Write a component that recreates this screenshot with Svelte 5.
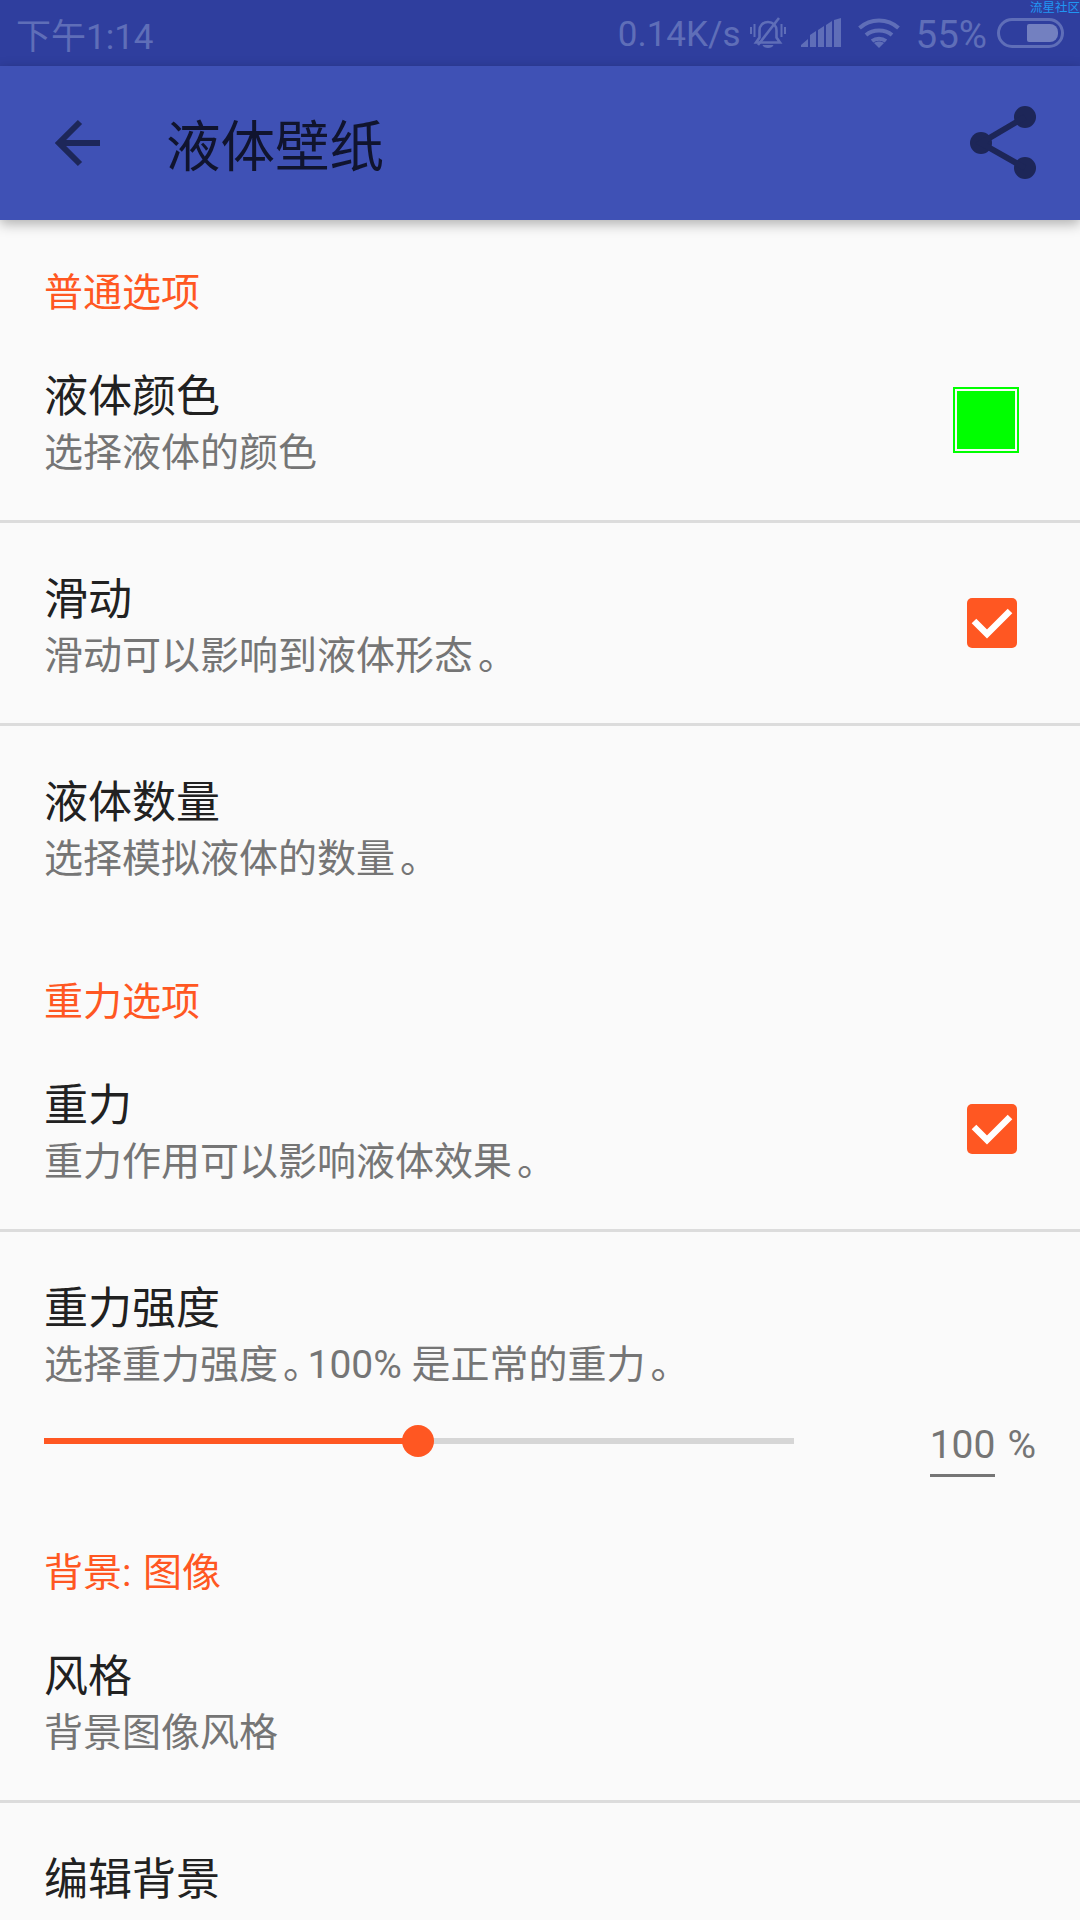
<script>
  const pages = [
    { type: 'cat', label: '普通选项' },
    { title: '液体颜色', summary: '选择液体的颜色', widget: 'color', divider: true },
    { title: '滑动', summary: '滑动可以影响到液体形态。', widget: 'check', divider: true },
    { title: '液体数量', summary: '选择模拟液体的数量。' },
    { type: 'cat', label: '重力选项' },
    { title: '重力', summary: '重力作用可以影响液体效果。', widget: 'check', divider: true },
    { title: '重力强度', summary: '选择重力强度。100% 是正常的重力。', widget: 'slider' },
    { type: 'cat', label: '背景: 图像' },
    { title: '风格', summary: '背景图像风格', divider: true },
    { title: '编辑背景', summary: '' }
  ];

  // the full stop sits further right in the cell than this font draws it
  const parts = (s) => s.split(/(。)/).filter(Boolean);
</script>

<div class="screen">
  <div class="status">
    <span class="time">下午1:14</span>
    <div class="status-right">
      <span class="speed">0.14K/s</span>
      <svg class="bell" width="36" height="32" viewBox="0 0 36 32" fill="none" stroke="#5f6eb8" stroke-width="2.6">
        <path d="M6 25.500h24l-3.500-5v-7c0-5-3.500-8.500-8.500-8.500s-8.500 3.500-8.500 8.500v7z" />
        <path d="M8 28 29 1" />
        <path d="M12.500 28h11c-1 4-10 4-11 0z" fill="#5f6eb8" stroke="none" />
        <path d="M1 10v7M4.500 7v13M31.500 7v13M35 10v7" stroke-width="2" />
      </svg>
      <svg class="signal" width="40" height="30" viewBox="0 0 40 30" fill="#5f6eb8">
        <path d="M0 29v-2l7-6v8zM9 29V17l6-4v16zM17 29V12l6-4v21zM25 29V7l6-4v26zM33 29V2l7-2v29z" />
      </svg>
      <svg class="wifi" width="42" height="30" viewBox="0 0 42 30" fill="none" stroke="#5f6eb8" stroke-width="4">
        <path d="M1.500 10c11-10 28-10 39 0M8 17c7-6 19-6 26 0M14 23c4-3 10-3 14 0" />
        <path d="M21 30l-5-5c3-2 7-2 10 0z" fill="#5f6eb8" stroke="none" />
      </svg>
      <span class="pct">55%</span>
      <div class="battery"><div class="level"></div></div>
    </div>
    <span class="mark">流星社区</span>
  </div>

  <header class="bar">
    <svg class="back" width="48" height="48" viewBox="0 0 48 48" fill="none" stroke="#1d2759" stroke-width="6">
      <path d="M46 24H5M26 3 5 24l21 21" />
    </svg>
    <h1>液体壁纸</h1>
    <svg class="share" width="68" height="74" viewBox="0 0 68 74" fill="#1d2658">
      <circle cx="56" cy="11" r="11" />
      <circle cx="12" cy="37" r="11" />
      <circle cx="56" cy="62" r="11" />
      <path d="M56 11 12 37l44 25" fill="none" stroke="#1d2658" stroke-width="6" />
    </svg>
  </header>

  <main class="list">
    {#each pages as p}
      {#if p.type === 'cat'}
        <div class="cat">{p.label}</div>
      {:else}
        <section class="pref" class:divider={p.divider} class:has-slider={p.widget === 'slider'}>
          <div class="pref-main">
            <div class="texts">
              <div class="title">{p.title}</div>
              {#if p.summary}
                <div class="summary">
                  {#each parts(p.summary) as part}{#if part === '。'}<span class="stop">{part}</span>{:else}{part}{/if}{/each}
                </div>
              {/if}
            </div>
            {#if p.widget === 'color'}
              <div class="swatch"><div></div></div>
            {:else if p.widget === 'check'}
              <svg class="check" width="50" height="50" viewBox="0 0 50 50">
                <rect width="50" height="50" rx="5" fill="#ff5722" />
                <path d="M7 23l13 13 23-23" fill="none" stroke="#fff" stroke-width="6.500" />
              </svg>
            {/if}
          </div>
          {#if p.widget === 'slider'}
            <div class="slider-row">
              <div class="track">
                <div class="fill"></div>
                <div class="thumb"></div>
              </div>
              <div class="value"><span>100</span><em>%</em></div>
            </div>
          {/if}
        </section>
      {/if}
    {/each}
  </main>
</div>

<style>
  :global(body) {
    margin: 0;
  }

  .screen {
    width: 1080px;
    height: 1920px;
    overflow: hidden;
    background: #fafafa;
    font-family: "Roboto", "Noto Sans CJK SC", sans-serif;
  }

  .status {
    position: relative;
    height: 66px;
    display: flex;
    align-items: center;
    justify-content: space-between;
    padding: 0 16px;
    background: #2f3e9e;
    color: #5f6eb8;
    font-size: 35px;
  }

  .status-right {
    display: flex;
    align-items: center;
  }

  .speed {
    padding-top: 3px;
  }

  .bell {
    margin-left: 9px;
  }

  .signal {
    margin-left: 15px;
  }

  .wifi {
    margin-left: 17px;
  }

  .pct {
    margin-left: 16px;
    padding-top: 3px;
    font-size: 38.500px;
  }

  .battery {
    width: 67px;
    height: 30px;
    margin-left: 10px;
    box-sizing: border-box;
    display: flex;
    justify-content: flex-end;
    padding: 3px;
    border: 3px solid #5f6eb8;
    border-radius: 15px;
  }

  .level {
    width: 31px;
    background: #7380c0;
    border-radius: 2px 8px 8px 2px;
  }

  .mark {
    position: absolute;
    top: 1px;
    right: 0;
    font-size: 12.500px;
    line-height: 13px;
    color: #2196f3;
  }

  .bar {
    position: relative;
    height: 154px;
    display: flex;
    align-items: center;
    padding: 0 43px 0 54px;
    background: #3f51b5;
    box-shadow: 0 4px 12px rgba(0, 0, 0, 0.3);
  }

  h1 {
    margin: 0 0 2px 64px;
    flex: 1;
    font-size: 54.500px;
    font-weight: 400;
    color: #10142e;
  }

  .pref {
    box-sizing: border-box;
    height: 203px;
    padding: 48px 44px 0;
  }

  .pref.divider {
    border-bottom: 3px solid #dcdcdc;
  }

  .pref.has-slider {
    height: 268px;
  }

  .pref-main {
    display: flex;
    align-items: flex-start;
    justify-content: space-between;
  }

  .title {
    font-size: 44px;
    line-height: 58px;
    color: #212121;
  }

  .summary {
    margin-top: -1px;
    font-size: 39px;
    line-height: 56px;
    white-space: nowrap;
    color: #757575;
  }

  .stop {
    margin: 0 5px;
    font-feature-settings: "halt";
  }

  .cat {
    height: 100px;
    padding: 49px 0 0 44px;
    box-sizing: border-box;
    font-size: 39px;
    line-height: 48px;
    word-spacing: 2px;
    color: #ff5722;
  }

  .swatch {
    width: 66px;
    height: 66px;
    box-sizing: border-box;
    padding: 2px;
    border: 2px solid #00ff00;
    margin: 19px 17px 0 0;
  }

  .swatch div {
    width: 58px;
    height: 58px;
    background: #00ff00;
  }

  .check {
    margin: 27px 19px 0 0;
  }

  .slider-row {
    display: flex;
    align-items: flex-start;
    justify-content: space-between;
    margin-top: 26px;
  }

  .track {
    position: relative;
    width: 750px;
    height: 6px;
    margin-top: 19px;
    background: #d6d6d6;
  }

  .fill {
    width: 374px;
    height: 6px;
    background: #ff5722;
  }

  .thumb {
    position: absolute;
    left: 358px;
    top: -13px;
    width: 32px;
    height: 32px;
    border-radius: 50%;
    background: #ff5722;
  }

  .value {
    display: flex;
    gap: 12px;
    margin-top: 3px;
    font-size: 39px;
    line-height: 46px;
    color: #757575;
  }

  .value span {
    border-bottom: 3px solid #757575;
    padding-bottom: 6px;
  }

  .value em {
    font-style: normal;
  }
</style>
